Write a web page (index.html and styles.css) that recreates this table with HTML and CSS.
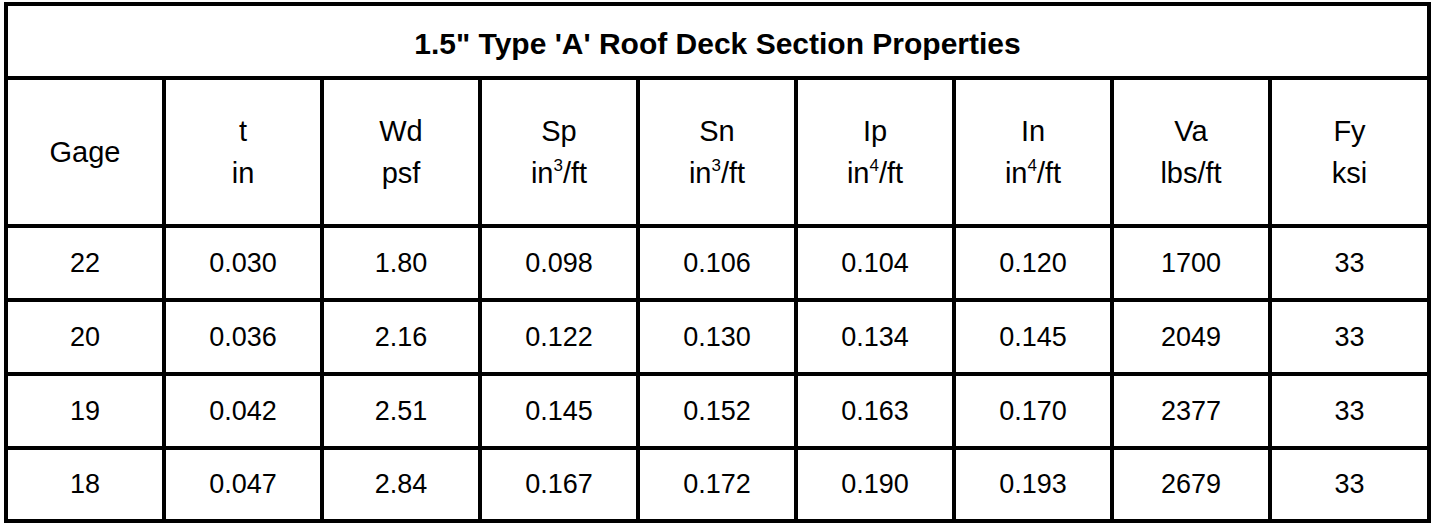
FILE: index.html
```html
<!DOCTYPE html>
<html>
<head>
<meta charset="utf-8">
<link rel="stylesheet" href="styles.css">
</head>
<body>
<table class="props">
  <tr class="title-row"><th colspan="9" class="title">1.5" Type 'A' Roof Deck Section Properties</th></tr>
  <tr class="head-row">
    <th>Gage</th>
    <th>t<br>in</th>
    <th>Wd<br>psf</th>
    <th>Sp<br>in<sup>3</sup>/ft</th>
    <th>Sn<br>in<sup>3</sup>/ft</th>
    <th>Ip<br>in<sup>4</sup>/ft</th>
    <th>In<br>in<sup>4</sup>/ft</th>
    <th>Va<br>lbs/ft</th>
    <th class="last">Fy<br>ksi</th>
  </tr>
  <tr class="data-row"><td>22</td><td>0.030</td><td>1.80</td><td>0.098</td><td>0.106</td><td>0.104</td><td>0.120</td><td>1700</td><td class="last">33</td></tr>
  <tr class="data-row"><td>20</td><td>0.036</td><td>2.16</td><td>0.122</td><td>0.130</td><td>0.134</td><td>0.145</td><td>2049</td><td class="last">33</td></tr>
  <tr class="data-row"><td>19</td><td>0.042</td><td>2.51</td><td>0.145</td><td>0.152</td><td>0.163</td><td>0.170</td><td>2377</td><td class="last">33</td></tr>
  <tr class="data-row final"><td>18</td><td>0.047</td><td>2.84</td><td>0.167</td><td>0.172</td><td>0.190</td><td>0.193</td><td>2679</td><td class="last">33</td></tr>
</table>
</body>
</html>
```
FILE: styles.css
```css
html, body {
  margin: 0;
  padding: 0;
  background: #fff;
}
body {
  font-family: "Liberation Sans", Arial, Helvetica, sans-serif;
  color: #000;
}
.props {
  margin: 2px 0 0 4px;
  border-collapse: separate;
  border-spacing: 0;
  border-top: 4px solid #000;
  border-left: 4px solid #000;
  table-layout: fixed;
}
.props th,
.props td {
  border-right: 4px solid #000;
  border-bottom: 4px solid #000;
  padding: 0;
  text-align: center;
  vertical-align: middle;
  width: 154px;
  font-size: 27px;
  font-weight: normal;
  box-sizing: content-box;
}
.props .last {
  width: 155px;
}
.title-row th.title {
  padding-top: 6px;
  height: 64px;
  font-weight: bold;
  font-size: 30px;
  width: auto;
}
.head-row th {
  height: 144px;
  font-size: 29px;
  line-height: 42px;
}
.head-row sup {
  font-size: 17px;
  line-height: 0;
  vertical-align: 12px;
}
.data-row td {
  height: 70px;
}
.data-row.final td {
  height: 69px;
}
```
